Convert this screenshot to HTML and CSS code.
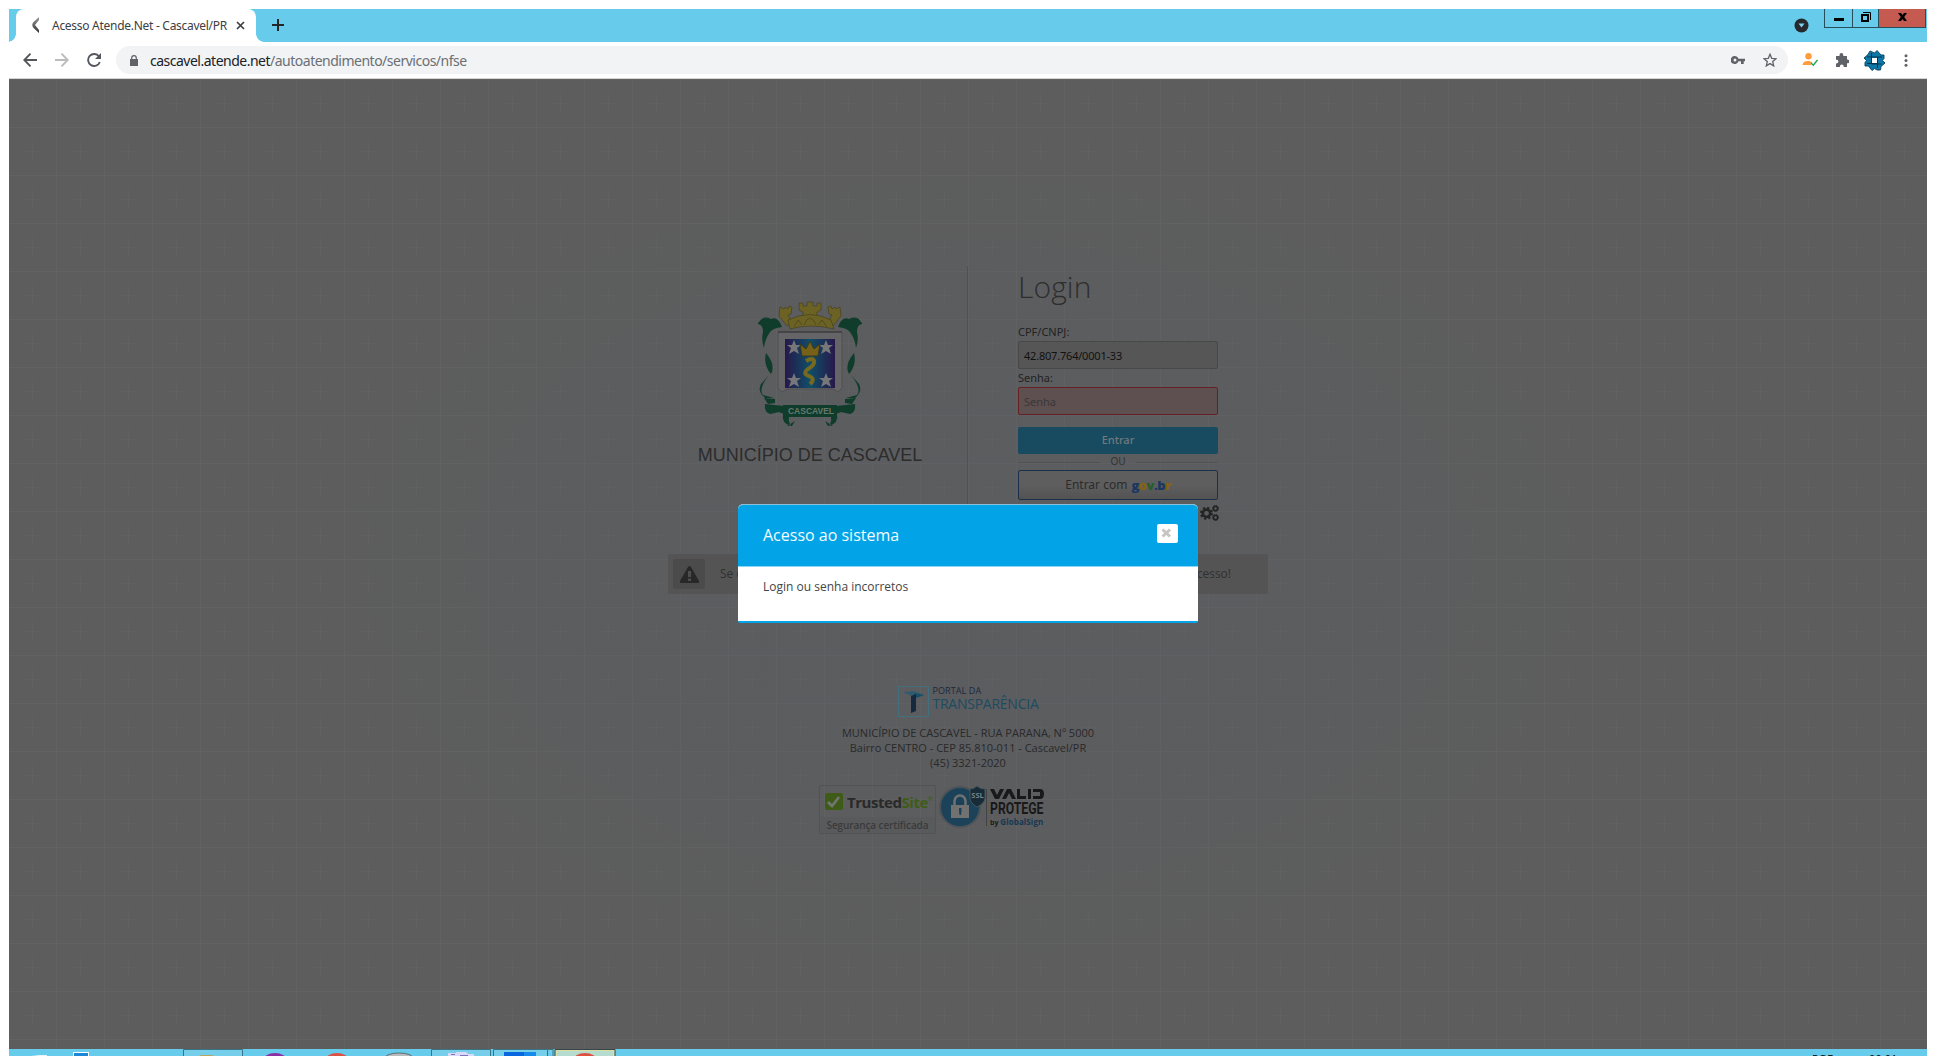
FILE: index.html
```html
<!DOCTYPE html>
<html lang="pt-BR">
<head>
<meta charset="utf-8">
<title>Acesso Atende.Net - Cascavel/PR</title>
<link rel="stylesheet" href="styles.css">
</head>
<body>
<div class="window">
  <header class="tabstrip">
    <div class="tab">
      <svg class="favicon" width="10" height="18" viewBox="0 0 10 18"><defs><linearGradient id="fav" x2="0" y2="1"><stop offset="0" stop-color="#999"/><stop offset="1" stop-color="#333"/></linearGradient></defs><path d="M8 1v3L4 9l4 5v3L2.500 12Q0 9 2.500 6z" fill="url(#fav)"/></svg>
      <span class="tab-title">Acesso Atende.Net - Cascavel/PR</span>
      <svg class="tab-close" width="9" height="9" viewBox="0 0 9 9"><path d="M1 1l7 7M8 1l-7 7" stroke="#3c4043" stroke-width="1.700"/></svg>
    </div>
    <svg class="newtab" width="12" height="12" viewBox="0 0 12 12"><path d="M6 0v12M0 6h12" stroke="#222629" stroke-width="2"/></svg>
    <svg class="tabsearch" width="15" height="15" viewBox="0 0 15 15"><circle cx="7.500" cy="7.500" r="7" fill="#25292d"/><path d="M4.500 5.500h6l-3 4z" fill="#7fd3ef"/></svg>
    <div class="controls">
      <div class="ctl min"><svg width="10" height="3"><path d="M0 0h10v3H0z"/></svg></div>
      <div class="ctl max"><svg width="10" height="10" viewBox="0 0 10 10" fill="none" stroke="#000"><path d="M1 3h6v6H1z" stroke-width="2"/><path d="M2 .5h7.500V8"/></svg></div>
      <div class="ctl close"><svg width="9" height="8" viewBox="0 0 9 8"><path d="M0 0h3l1.500 2L6 0h3L6.200 4 9 8H6L4.500 6 3 8H0l2.800-4z"/></svg></div>
    </div>
  </header>
  <nav class="toolbar">
    <svg class="back" width="14" height="14" viewBox="0 0 14 14" fill="none" stroke="#54585d" stroke-width="1.900"><path d="M14 7H1.500M7.500 .7L1.300 7l6.200 6.300"/></svg>
    <svg class="fwd" width="14" height="14" viewBox="0 0 14 14" fill="none" stroke="#b9bbbd" stroke-width="1.900"><path d="M0 7h12.500M6.500 .7L12.700 7l-6.200 6.300"/></svg>
    <svg class="reload" width="14" height="14" viewBox="0 0 14 14"><path d="M12 3.500A6 6 0 1 0 12.800 9" fill="none" stroke="#54585d" stroke-width="1.900"/><path d="M14 0v6H8z" fill="#54585d"/></svg>
    <div class="omnibox">
      <svg class="lock" width="8" height="11" viewBox="0 0 8 11"><path d="M0 4h8v7H0z" fill="#5f6368"/><path d="M1.700 4.500V3a2.300 2.300 0 0 1 4.600 0v1.500" fill="none" stroke="#5f6368" stroke-width="1.200"/></svg>
      <span class="url"><b>cascavel.atende.net</b>/autoatendimento/servicos/nfse</span>
      <svg class="key" width="14" height="8" viewBox="0 0 14 8"><path d="M4 0a4 4 0 1 0 3.500 5.300H10V8h2.700V5.300H14V2.700H7.500A4 4 0 0 0 4 0m0 2.500a1.500 1.500 0 1 1 0 3 1.500 1.500 0 0 1 0-3" fill="#5f6368"/></svg>
      <svg class="star" width="14" height="14" viewBox="0 0 14 14"><path d="M7 1.300l1.700 4 4.300.4-3.300 2.900 1 4.300L7 10.600l-3.700 2.300 1-4.300L1 5.700l4.300-.4z" fill="none" stroke="#5f6368" stroke-width="1.300"/></svg>
    </div>
    <svg class="person" width="16" height="14" viewBox="0 0 16 14"><circle cx="6.500" cy="3.300" r="3.200" fill="#ff9c3c"/><path d="M.5 12Q1 7.500 7 8l3.500 1.200-2 1.300 1 1.500z" fill="#ff9c3c"/><path d="M9 10l2.300 2.300L15.500 7" fill="none" stroke="#1ea554" stroke-width="1.400"/></svg>
    <svg class="puzzle" width="14" height="14" viewBox="0 0 14 14"><path d="M1 3h3.500V2a1.900 1.900 0 0 1 3.800 0v1H12v3.500h.3a1.900 1.900 0 0 1 0 3.800H12V14H8.700v-.5a1.900 1.900 0 0 0-3.800 0v.5H1v-3.600h.6a1.800 1.800 0 0 0 0-3.600H1z" fill="#5f6368"/></svg>
    <svg class="ext" width="21" height="21" viewBox="0 0 21 21"><path d="M6 1l4.500 2L13 .5 17 5h3v3.500l-1.500 2L21 13l-4 3.500-.5 3.500H13l-2.500-1.500L8 20.500 4.500 16H1v-3.500l1.500-2L0 8l4-3.500z" fill="#0b78a8" stroke="#093f5c" stroke-width=".9"/><path d="M7.500 3v11h10M18 7H3M13.500 18V7M3 13.500h11" fill="none" stroke="#06344e"/><path d="M8 8h5v5H8z" fill="#fff"/></svg>
    <svg class="dots" width="4" height="13" viewBox="0 0 4 13" fill="#5f6368"><circle cx="2" cy="1.700" r="1.500"/><circle cx="2" cy="6.500" r="1.500"/><circle cx="2" cy="11.300" r="1.500"/></svg>
  </nav>
  <main class="page">
    <div class="portal">
      <section class="access">
        <div class="city">
          <svg class="crest" width="104" height="126" viewBox="0 0 104 126">
            <defs><linearGradient id="sh"><stop offset="0" stop-color="#27184a"/><stop offset=".5" stop-color="#104e68"/><stop offset="1" stop-color="#27184a"/></linearGradient></defs>
            <g fill="#6b6224" stroke="#403c20" stroke-width=".6">
              <path d="M22 6l4 2 1-2 3 2 1-3 3 1-1 7-3 1 4 7-5 4-8-10zM82 6l-4 2-1-2-3 2-1-3-3 1 1 7 3 1-4 7 5 4 8-10z"/>
              <path d="M41 2h4v3h4V1h6v4h4V2h4v7l-4 2v7H45v-7l-4-2z"/>
              <path d="M30 19Q52 8 73 19l3 9Q52 22 32 28z"/>
              <path d="M36 26l4-7 4 5M46 24q6-14 12 0M60 24l4-5 5 7" fill="none"/>
            </g>
            <g fill="#103c2b">
              <g id="leaf"><path d="M1 21q4-7 12-3 7-3 11 8-9 1-12 5-5 7-6 16-3-8-1-16 0-8-6-8z"/>
              <path d="M8 52q10 12 5 21Q5 64 8 52M11 74Q0 88 5 94l11 3H7Q-1 90 3 83z"/>
              <path d="M6 97l11 1 0 4-7 1zM7 103l19 2v8l-5-2-9 2q-6-2-5-10zM25 113q-2 9 8 12-4-7-1-11zM29 125l8-5-3 5z"/></g>
              <use href="#leaf" transform="translate(104) scale(-1 1)"/>
              <path d="M25 104h54v12H25z"/>
            </g>
            <path d="M20 31h64v56l-4 4-5-3H29l-5 3-4-4z" fill="#656568" stroke="#505052"/>
            <path d="M20 31h64" stroke="#333"/>
            <path d="M27 38h50v49H27z" fill="url(#sh)"/>
            <path id="star" d="M36 39l2 5h5l-4 3 2 6-5-3-5 3 2-6-4-3h5z" fill="#77777a"/>
            <use href="#star" x="32"/><use href="#star" y="33"/><use href="#star" x="32" y="33"/>
            <path d="M42 43l6 5 4-8 4 8 6-5-2 12H44z" fill="#776018" stroke="#39391e"/>
            <path d="M48 60q7-4 8 0 1 4-6 8-6 5 1 7 7 3 1 8" fill="none" stroke="#766a20" stroke-width="4"/>
            <text x="53" y="113" text-anchor="middle">CASCAVEL</text>
          </svg>
          <h1>MUNICÍPIO DE CASCAVEL</h1>
        </div>
        <div class="login">
          <h2>Login</h2>
          <label>CPF/CNPJ:</label>
          <div class="field value"><span>42.807.764/0001-33</span></div>
          <label>Senha:</label>
          <div class="field error"><span>Senha</span></div>
          <div class="enter"><span>Entrar</span></div>
          <div class="or"><span>OU</span></div>
          <div class="gov"><span>Entrar com</span><strong><i class="b">g</i><i class="y">o</i><i class="g">v</i><i class="b">.b</i><i class="y">r</i></strong></div>
          <svg class="gears" width="19" height="16" viewBox="0 0 19 16" fill="none" stroke="#242424"><circle cx="6.500" cy="8.300" r="3.700" stroke-width="2.600"/><circle cx="6.500" cy="8.300" r="5.500" stroke-width="2" stroke-dasharray="2.200 2.120"/><circle cx="15.500" cy="3.500" r="2.100" stroke-width="1.600"/><circle cx="15.500" cy="12.500" r="2.100" stroke-width="1.600"/><circle cx="15.500" cy="3.500" r="3" stroke-dasharray="1.200 1.156"/><circle cx="15.500" cy="12.500" r="3" stroke-dasharray="1.200 1.156"/></svg>
        </div>
      </section>
      <section class="notice">
        <div class="warn"><svg width="19" height="17" viewBox="0 0 19 17"><path d="M9.500 0Q10.300 0 11 1l8 14q.3 2-1 2H1q-1.300 0-1-2L8 1Q8.700 0 9.500 0" fill="#282828"/><path d="M8 5h3v6H8zM8 12.500h3V15H8z" fill="#4e4e4e"/></svg></div>
        <span class="start">Se e</span><span class="end">cesso!</span>
      </section>
      <footer>
        <div class="transparency">
          <svg width="31" height="31" viewBox="0 0 31 31"><path d="M.5 .5h30v30H.5z" fill="none" stroke="#43707f"/><path d="M5 6l11-1 10 4-8 3z" fill="#315b6c"/><path d="M16 7l10 2-8 3z" fill="#174f68"/><path d="M13 10l5-2v17l-5 2z" fill="#16293f"/></svg>
          <div><span class="pt1">PORTAL DA</span><span class="pt2">TRANSPARÊNCIA</span></div>
        </div>
        <address><span class="a1">MUNICÍPIO DE CASCAVEL - RUA PARANA, Nº 5000</span><span class="a2">Bairro CENTRO - CEP 85.810-011 - Cascavel/PR</span><span class="a3">(45) 3321-2020</span></address>
        <div class="seals">
          <div class="trusted">
            <div class="brand"><svg width="18" height="18" viewBox="0 0 18 18"><rect width="18" height="17" rx="2" fill="#3e5c17"/><path d="M3 9l4 4 7-9" fill="none" stroke="#757575" stroke-width="2.500"/></svg><span>Trusted<em>Site</em></span><sup>®</sup></div>
            <div class="cert"><span>Segurança certificada</span></div>
          </div>
          <svg class="ssl" width="47" height="44" viewBox="0 0 47 44"><circle cx="21" cy="22" r="20" fill="#1c4259" stroke="#4c5358" stroke-width="2"/><path d="M12 20h18v13H12z" fill="#717171"/><path d="M15.500 20v-4a5.500 5.500 0 0 1 11 0v4" fill="none" stroke="#717171" stroke-width="2.500"/><path d="M20 23h2.500v3l-.5 4h-1.500l-.5-4z" fill="#1c4259"/><path d="M31 4q4 0 7-3 3 3 8 3v9q0 5-8 9-7-4-7-9z" fill="#172c37" stroke="#47545b"/><text x="38.500" y="13" text-anchor="middle">SSL</text></svg>
          <div class="valid"><svg width="54" height="10" viewBox="0 0 54 10" fill="#191919"><path d="M0 0h4l3 6 3-6h4L9 10H5zM12 10l5-10h4l5 10h-4l-3-6-3 6zM27 0h3v7h6v3h-9zM38 0h3v10h-3zM43 0h7q4 0 4 5t-4 5h-7V7h7V3h-7z"/></svg><span class="protege">PROTEGE</span><span class="global">by <em>GlobalSign</em></span></div>
        </div>
      </footer>
    </div>
    <div class="modal">
      <div class="modal-head"><h3>Acesso ao sistema</h3><div class="dismiss"><svg width="11" height="10" viewBox="0 0 11 10"><path d="M1.500 1.500l7.500 7M9 1.500l-7.500 7" stroke="#c9c3c3" stroke-width="3"/></svg></div></div>
      <div class="modal-body"><span>Login ou senha incorretos</span></div>
    </div>
  </main>
  <div class="taskbar">
    <svg width="620" height="7" viewBox="9 0 620 7">
      <path d="M31 7l8-1h8v1z" fill="#e9f4f7"/><path d="M73 3h16v4H73z" fill="#fff"/><path d="M74 4h14v3H74z" fill="#1c87d6"/>
      <path d="M183.500 8V.5h59V8M431.500 8V.5h59V8M493.500 8V.5h54V8M548 .5h5V8" fill="#76cfea" stroke="#3a7384"/><path d="M200 6h13v1h-13z" fill="#b5a568"/>
      <ellipse cx="275" cy="12" rx="12" ry="8" fill="#8c31a4"/><ellipse cx="337" cy="12" rx="12" ry="8" fill="#da5345"/><ellipse cx="399" cy="9" rx="14" ry="5" fill="#b9bcbe" stroke="#566e76"/>
      <path d="M448 7V4h8V3h10l2 2h6v2z" fill="#d9d9fa"/><path d="M451 5h4v1h-4zM460 6h8v1h-8z" fill="#8073bd"/><path d="M504 3h32v4h-32z" fill="#0967df"/><path d="M524 3h12v4h-12z" fill="#168beb"/>
      <path d="M556 8V1h58v7" fill="#b5dccf" stroke="#dfdda0" stroke-width="2"/><path d="M555 8V.5h60V8" fill="none" stroke="#34464a"/><ellipse cx="585" cy="12" rx="12" ry="8" fill="#de5141"/>
    </svg>
    <div class="tray"><span>POR</span><span>00:01</span></div>
  </div>
</div>
</body>
</html>
```
FILE: styles.css
```css
* { box-sizing: border-box; }
body { margin: 0; background: #fff; font-family: "Open Sans", sans-serif; overflow: hidden; }
svg { display: block; flex: none; }
h1, h2, h3 { margin: 0; font-weight: 400; }
span, h1, h2, h3, label { white-space: nowrap; }
i, em { font-style: normal; }
.window { width: 1918px; height: 1047px; margin: 9px 0 0 9px; display: flex; flex-direction: column; overflow: hidden; }
.tabstrip { height: 33px; flex: none; display: flex; background: #67cceb; padding-left: 7px; }
.tab { position: relative; width: 240px; background: #fff; border-radius: 8px 8px 0 0; display: flex; align-items: center; padding: 0 11px 1px 15px; font-family: "Noto Sans", sans-serif; font-size: 12px; color: #3c4043; }
.tab::before, .tab::after { content: ""; position: absolute; bottom: 0; width: 8px; height: 8px; }
.tab::before { left: -8px; background: radial-gradient(circle at 0 0, #67cceb 7.5px, #fff 8px); }
.tab::after { right: -8px; background: radial-gradient(circle at 100% 0, #67cceb 7.5px, #fff 8px); }
.tab-title { margin-left: 11px; letter-spacing: -.28px; }
.tab-close { margin-left: auto; }
.newtab { margin: 10px auto 0 16px; }
.tabsearch { margin: 9px 15px 0 0; }
.controls { display: flex; height: 19px; margin-right: 1px; border: 1px solid #294e5b; border-top: 0; }
.ctl { display: flex; justify-content: center; align-items: center; padding-bottom: 2px; border-right: 1px solid #294e5b; }
.min { width: 28px; align-items: flex-end; padding-bottom: 6px; }
.max { width: 26px; }
.close { width: 46px; background: #c55b50; border: 0; }
.toolbar { height: 37px; flex: none; display: flex; align-items: center; background: #fff; border-bottom: 1px solid #d4d4d4; padding: 0 19px 0 14px; }
.fwd { margin-left: 18px; }
.reload { margin-left: 18px; }
.omnibox { display: flex; align-items: center; width: 1672px; height: 28px; margin-left: 15px; padding: 0 11px 0 14px; border-radius: 14px; background: #f1f3f4; }
.url { margin-left: 12px; font-family: "Noto Sans", sans-serif; font-size: 14px; color: #6b6f74; letter-spacing: -.5px; }
.url b { font-weight: 400; color: #202124; }
.key { margin-left: auto; }
.star { margin-left: 18px; }
.person { margin-left: 14px; }
.puzzle { margin-left: 17px; }
.ext { margin-left: 15px; }
.dots { margin-left: auto; }
.page {
  position: relative;
  flex: 1;
  background-color: #5d5d5d;
  background-image:
    radial-gradient(ellipse 650px 420px at center, rgba(88, 92, 100, .3) 40%, transparent),
    radial-gradient(ellipse 13px 1px at 24.5px 24.5px, #626262, transparent),
    radial-gradient(ellipse 1px 16px at 24.5px 24.5px, #626262, transparent),
    linear-gradient(90deg, #626262 1px, transparent 1px),
    linear-gradient(#626262 1px, transparent 1px);
  background-size: auto, 48px 48px, 48px 48px, 48px 48px, 48px 48px;
  background-position: 0 0, -1px 0, -1px 0, -1px 0, -1px 0;
}
.portal { width: 600px; margin: 0 auto; padding-top: 187px; }
.access { display: flex; height: 260px; }
.city { width: 300px; padding: 35px 15px 0 0; border-right: 1px solid #515151; display: flex; flex-direction: column; align-items: center; }
.crest text { font: 700 8.5px "Liberation Sans", sans-serif; fill: #66786e; }
h1 { margin-top: 16px; font: 18px/24px "Liberation Sans", sans-serif; color: #2c2c2c; }
.login { width: 200px; margin-left: 50px; display: flex; flex-direction: column; font-family: "Noto Sans", sans-serif; font-size: 11px; color: #222; }
h2 { height: 58px; font: 300 30px/42px "Open Sans", sans-serif; color: #2e2e2e; letter-spacing: .1px; }
label { height: 17px; line-height: 16px; }
.field { height: 28px; border: 1px solid #484848; border-radius: 2px; background: #565656; padding: 0 5px; line-height: 27px; }
.value { margin-bottom: 1px; color: #111; }
.value span { letter-spacing: -.2px; }
.error { background: #5e4f50; border-color: #681f22; color: #393939; }
.enter { height: 27px; margin-top: 12px; background: #184b60; border-radius: 2px; text-align: center; line-height: 26px; color: #707a7e; font-weight: 500; }
.or { height: 16px; display: flex; align-items: center; gap: 10px; color: #333; font-size: 10px; }
.or::before, .or::after { content: ""; flex: 1; height: 1px; background: #525252; }
.or span { margin-top: -2px; }
.gov { height: 30px; border: 1px solid #1b3149; border-radius: 2px; background: linear-gradient(#5e5e5e 50%, #535353); display: flex; align-items: center; justify-content: center; gap: 4px; padding-bottom: 1px; font-size: 12px; color: #2c2c2c; }
.gov strong { font: 800 13px "Open Sans", sans-serif; letter-spacing: -.5px; }
.gov .b { color: #1b3760; }
.gov .y { color: #87630c; }
.gov .g { color: #235f2b; }
.gears { align-self: flex-end; margin-top: 5px; margin-right: -1px; }
.notice { height: 40px; margin-top: 28px; display: flex; align-items: center; padding: 0 37px 0 5px; background: #545454; border-radius: 2px; font-size: 12px; color: #303030; }
.warn { width: 32px; height: 30px; display: flex; align-items: center; justify-content: center; background: #4b4b4b; border-radius: 2px; }
.start { margin: -2px 0 0 15px; }
.end { margin: -2px 0 0 auto; }
footer { display: flex; flex-direction: column; align-items: center; padding-top: 92px; }
.transparency { display: flex; gap: 4px; height: 31px; }
.transparency div { display: flex; flex-direction: column; }
.pt1 { font-size: 9px; line-height: 10px; color: #1b293c; letter-spacing: .1px; }
.pt2 { font-size: 14px; line-height: 16px; color: #1d4b61; letter-spacing: -.25px; }
address { margin-top: 8px; display: flex; flex-direction: column; align-items: center; font-style: normal; font-size: 11px; line-height: 15px; color: #292929; }
.seals { margin-top: 15px; display: flex; align-self: flex-start; margin-left: 151px; }
.trusted { width: 117px; height: 49px; border: 1px solid #525354; border-radius: 2px; }
.brand { height: 31px; display: flex; align-items: center; padding-left: 5px; font-size: 15px; font-weight: 700; letter-spacing: -.45px; color: #292929; }
.brand span { margin-left: 4px; }
.brand em { color: #3e5c17; }
.brand sup { font-size: 6px; margin-bottom: 6px; color: #3e5c17; }
.cert { height: 16px; background: #595a5b; text-align: center; font: 600 10px/16px "Open Sans", sans-serif; color: #3b3b3c; letter-spacing: -.1px; }
.ssl { margin-left: 3px; }
.ssl text { font: 700 7.5px "Open Sans", sans-serif; fill: #758087; }
.valid { height: 37px; margin: 4px 0 0; padding-left: 3px; border-left: 1px solid #424242; display: flex; flex-direction: column; }
.protege { font: 700 17px/18px "Roboto", sans-serif; color: #191919; transform: scaleX(.72); transform-origin: 0 0; width: 54px; }
.global { font: 700 7px/9px "Open Sans", sans-serif; color: #1b1b1b; }
.global em { color: #163853; font-size: 8px; letter-spacing: .1px; }
.modal { position: absolute; left: 729px; top: 425px; width: 460px; height: 119px; border-top: 1px solid #8dbfd6; border-bottom: 2px solid #03a4e7; border-radius: 5px 5px 2px 2px; background: #fff; overflow: hidden; }
.modal-head { height: 62px; background: #03a4e7; border-bottom: 1px solid #8bd5f5; display: flex; justify-content: space-between; padding: 0 20px 0 25px; }
h3 { font: 400 16px/61px "Open Sans", sans-serif; color: #f4fbfe; }
.dismiss { width: 21px; height: 19px; margin-top: 19px; padding: 4px 4px; background: #fff; border-radius: 2px; }
.modal-body { padding: 11px 25px; font-size: 12px; line-height: 17px; color: #444; }
.taskbar { height: 7px; flex: none; background: #67cceb; display: flex; justify-content: space-between; overflow: hidden; }
.tray { width: 115px; display: flex; gap: 35px; font: 11px/14px "Noto Sans", sans-serif; color: #000; padding-top: 3px; }
```
